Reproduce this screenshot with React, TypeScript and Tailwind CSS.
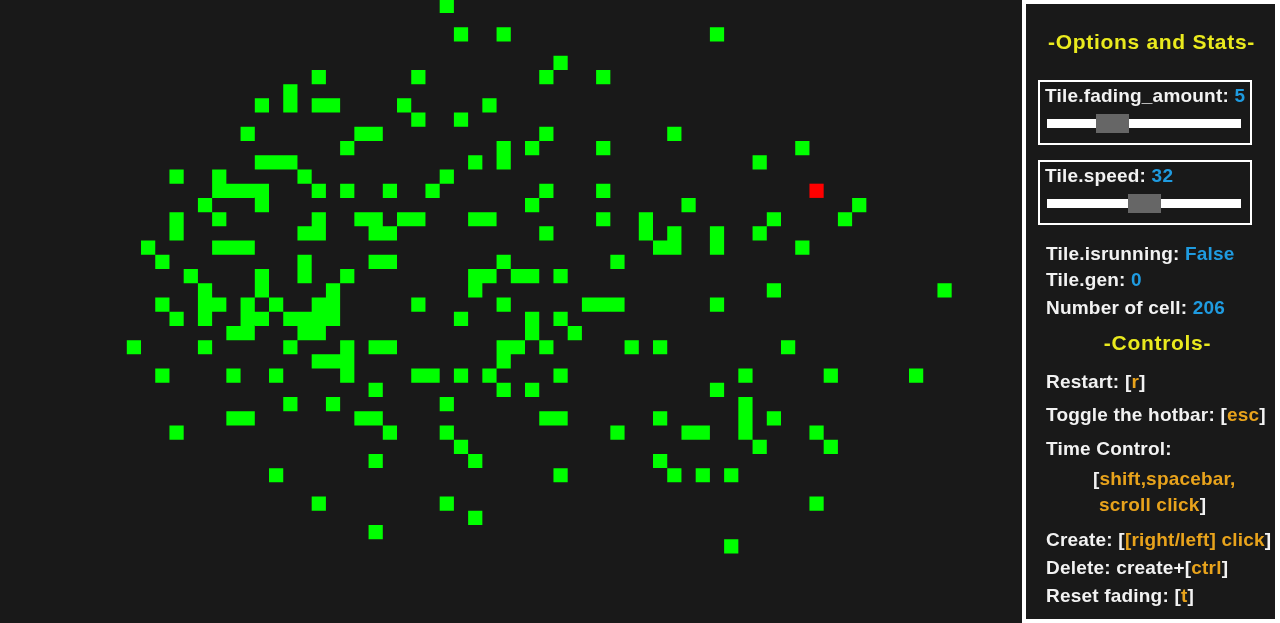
const PITCH = 14.222;
const OFFSET = -1.2;

// live cells, row number -> columns
const ROWS: Record<number, number[]> = {
  0: [31],
  2: [32, 35, 50],
  4: [39],
  5: [22, 29, 38, 42],
  6: [20],
  7: [18, 20, 22, 23, 28, 34],
  8: [29, 32],
  9: [17, 25, 26, 38, 47],
  10: [24, 35, 37, 42, 56],
  11: [18, 19, 20, 33, 35, 53],
  12: [12, 15, 21, 31],
  13: [15, 16, 17, 18, 22, 24, 27, 30, 38, 42],
  14: [14, 18, 37, 48, 60],
  15: [12, 15, 22, 25, 26, 28, 29, 33, 34, 42, 45, 54, 59],
  16: [12, 21, 22, 26, 27, 38, 45, 47, 50, 53],
  17: [10, 15, 16, 17, 46, 47, 50, 56],
  18: [11, 21, 26, 27, 35, 43],
  19: [13, 18, 21, 24, 33, 34, 36, 37, 39],
  20: [14, 18, 23, 33, 54, 66],
  21: [11, 14, 15, 17, 19, 22, 23, 29, 35, 41, 42, 43, 50],
  22: [12, 14, 17, 18, 20, 21, 22, 23, 32, 37, 39],
  23: [16, 17, 21, 22, 37, 40],
  24: [9, 14, 20, 24, 26, 27, 35, 36, 38, 44, 46, 55],
  25: [22, 23, 24, 35],
  26: [11, 16, 19, 24, 29, 30, 32, 34, 39, 52, 58, 64],
  27: [26, 35, 37, 50],
  28: [20, 23, 31, 52],
  29: [16, 17, 25, 26, 38, 39, 46, 52, 54],
  30: [12, 27, 31, 43, 48, 49, 52, 57],
  31: [32, 53, 58],
  32: [26, 33, 46],
  33: [19, 39, 47, 49, 51],
  35: [22, 31, 57],
  36: [33],
  37: [26],
  38: [51],
};

function square(col: number, row: number) {
  const x = (col * PITCH + OFFSET).toFixed(2);
  const y = (row * PITCH + OFFSET).toFixed(2);
  return `M${x} ${y}h${PITCH}v${PITCH}h-${PITCH}z`;
}

const livePath = Object.entries(ROWS)
  .flatMap(([row, cols]) => cols.map((col) => square(col, Number(row))))
  .join("");

function Board() {
  return (
    <div className="min-w-0 flex-1">
      <svg width="1022" height="623" className="block">
        <path d={livePath} fill="#00ff00" />
        <path d={square(57, 13)} fill="#ff0000" />
      </svg>
    </div>
  );
}

function Slider({ label, value, handle }: { label: string; value: string; handle: string }) {
  return (
    <div className="ml-3 mr-[23px] h-[65px] border-2 border-white pl-[5px] pt-[2px]">
      <p className="whitespace-nowrap leading-[24px]">
        {label}: <span className="text-[#1f9be0]">{value}</span>
      </p>
      <div className="mt-[11px] ml-[2px] flex h-[9px] w-[194px] items-center bg-white">
        <div className={`h-[19px] w-[33px] bg-[#666666] ${handle}`} />
      </div>
    </div>
  );
}

function Stat({ label, value, className }: { label: string; value: string; className: string }) {
  return (
    <p className={`leading-[24px] ${className}`}>
      {label}: <span className="text-[#1f9be0]">{value}</span>
    </p>
  );
}

function Key({ children }: { children: string }) {
  return <span className="text-[#e8a31c]">{children}</span>;
}

export default function App() {
  return (
    <div className="flex h-[623px] w-[1280px] overflow-hidden bg-[#191919]" style={{ fontFamily: '"Liberation Sans", sans-serif' }}>
      <Board />
      <aside className="w-[258px] shrink-0 border-y-4 border-l-4 border-r-[5px] border-white text-[19px] font-bold tracking-[0.2px] text-[#f2f2f2] blur-[0.4px]">
        <h2 className="mt-[26px] pl-[2px] text-center text-[21px] leading-[24px] tracking-[0.7px] text-[#eaea1e]">-Options and Stats-</h2>
        <div className="mt-[26px]">
          <Slider label="Tile.fading_amount" value="5" handle="ml-[49px]" />
        </div>
        <div className="mt-[15px]">
          <Slider label="Tile.speed" value="32" handle="ml-[81px]" />
        </div>
        <div className="pl-[20px]">
          <Stat label="Tile.isrunning" value="False" className="mt-[17px]" />
          <Stat label="Tile.gen" value="0" className="mt-[2px]" />
          <Stat label="Number of cell" value="206" className="mt-[4px]" />
        </div>
        <h3 className="mt-[11px] pl-[14px] text-center text-[21px] leading-[24px] tracking-[0.7px] text-[#eaea1e]">-Controls-</h3>
        <div className="pl-[20px] leading-[24px]">
          <p className="mt-[15px]">Restart: [<Key>r</Key>]</p>
          <p className="mt-[9px] whitespace-nowrap">Toggle the hotbar: [<Key>esc</Key>]</p>
          <p className="mt-[10px]">Time Control:</p>
          <p className="mt-[6px] pl-[47px]">[<Key>shift,spacebar,</Key></p>
          <p className="mt-[2px] pl-[53px]"><Key>scroll click</Key>]</p>
          <p className="mt-[11px] whitespace-nowrap">Create: [<Key>[right/left] click</Key>]</p>
          <p className="mt-[4px]">Delete: create+[<Key>ctrl</Key>]</p>
          <p className="mt-[4px]">Reset fading: [<Key>t</Key>]</p>
        </div>
      </aside>
    </div>
  );
}
